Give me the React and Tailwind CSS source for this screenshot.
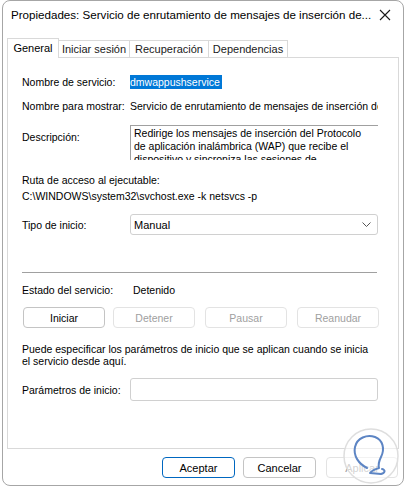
import { useState } from 'react'

const tabs = [
  { label: 'General', w: 'w-[52px]' },
  { label: 'Iniciar sesión', w: 'w-[71px]' },
  { label: 'Recuperación', w: 'w-[79px]' },
  { label: 'Dependencias', w: 'w-[79px]' },
]

function Row({ label, children, className = '' }) {
  return (
    <div className={`flex items-center ${className}`}>
      <span className="w-[108px] shrink-0 whitespace-nowrap">{label}</span>
      {children}
    </div>
  )
}

export default function App() {
  const [tab] = useState(0)

  return (
    <div className="w-[406px] h-[488px] bg-white font-['Liberation_Sans',Arial,sans-serif] text-[10.5px] leading-[14px] text-black overflow-hidden">
      <div className="relative ml-[2px] w-[402px] h-[486px] border border-[#a6a6a6] rounded-[8px] bg-white flex flex-col">

        {/* ── barra de título ── */}
        <div className="h-[37px] flex items-start pt-[7px] pl-[8px] pr-[12px]">
          <span className="flex-1 text-[11.6px] leading-[14px] whitespace-nowrap overflow-hidden">
            Propiedades: Servicio de enrutamiento de mensajes de inserción de...
          </span>
          <svg width="12" height="12" viewBox="0 0 12 12" className="mt-[1px]">
            <path d="M1 1 L11 11 M11 1 L1 11" stroke="#1a1a1a" strokeWidth="1.1" />
          </svg>
        </div>

        {/* ── pestañas ── */}
        <div className="flex items-end pl-[4px] h-[19px] relative z-10">
          {tabs.map((t, i) => (
            <div
              key={t.label}
              className={
                i === tab
                  ? `${t.w} h-[20px] pt-[2px] border border-b-0 border-[#d9d9d9] bg-white text-[11px] leading-[14px] text-center -mb-px`
                  : `${t.w} h-[17px] border border-l-0 border-b-0 border-[#d9d9d9] bg-white text-[11px] leading-[16px] text-center text-[#1a1a1a]`
              }
            >
              {t.label}
            </div>
          ))}
        </div>

        {/* ── panel General ── */}
        <div className="mx-[4px] h-[392px] border border-[#d9d9d9] px-[14px] pt-[17px]">
          <Row label="Nombre de servicio:">
            <span className="bg-[#0078d7] text-white pr-[2px]">dmwappushservice</span>
          </Row>
          <Row label="Nombre para mostrar:" className="mt-[10px]">
            <span className="w-[248px] whitespace-nowrap overflow-hidden">
              Servicio de enrutamiento de mensajes de inserción de WAP de administración de dispositivos
            </span>
          </Row>
          <div className="flex mt-[12px]">
            <span className="w-[108px] shrink-0 pt-[5px]">Descripción:</span>
            <div className="w-[248px] h-[35px] overflow-hidden border-t border-l border-[#a0a0a0] pl-[3px] pt-[1px] leading-[13px]">
              Redirige los mensajes de inserción del Protocolo<br />
              de aplicación inalámbrica (WAP) que recibe el<br />
              dispositivo y sincroniza las sesiones de
            </div>
          </div>
          <div className="mt-[12px] leading-[16px]">
            <div>Ruta de acceso al ejecutable:</div>
            <div>C:\WINDOWS\system32\svchost.exe -k netsvcs -p</div>
          </div>
          <Row label="Tipo de inicio:" className="mt-[10px]">
            <div className="w-[248px] h-[21px] border border-[#d0d0d0] rounded-[3px] flex items-center pl-[3px] pr-[6px]">
              <span className="flex-1 text-[11px]">Manual</span>
              <svg width="9" height="6" viewBox="0 0 9 6">
                <path d="M0.5 0.5 L4.5 4.5 L8.5 0.5" fill="none" stroke="#555" strokeWidth="1" />
              </svg>
            </div>
          </Row>
          <div className="mt-[37px] mr-[7px] border-t border-[#a0a0a0]" />
          <div className="flex mt-[10px]">
            <span className="w-[111px] shrink-0">Estado del servicio:</span>
            <span>Detenido</span>
          </div>
          <div className="flex gap-[8px] mt-[10px] pl-[1px]">
            <button className="w-[82px] h-[21px] border border-[#c4c4c4] rounded-[4px] bg-white text-[10.5px]">Iniciar</button>
            <button className="w-[82px] h-[21px] border border-[#e3e3e3] rounded-[4px] bg-white text-[10.5px] text-[#a0a0a0]">Detener</button>
            <button className="w-[82px] h-[21px] border border-[#e3e3e3] rounded-[4px] bg-white text-[10.5px] text-[#a0a0a0] ml-[2px]">Pausar</button>
            <button className="w-[82px] h-[21px] border border-[#e3e3e3] rounded-[4px] bg-white text-[10.5px] text-[#a0a0a0] ml-[2px]">Reanudar</button>
          </div>
          <p className="mt-[15px] leading-[12px] pr-[8px]">
            Puede especificar los parámetros de inicio que se aplican cuando se inicia el servicio desde aquí.
          </p>
          <Row label="Parámetros de inicio:" className="mt-[11px]">
            <div className="w-[248px] h-[23px] border border-[#d0d0d0] rounded-[3px]" />
          </Row>
        </div>

        {/* ── botones del diálogo ── */}
        <div className="flex justify-end gap-[8px] pr-[5px] mt-[8px]">
          <button className="w-[73px] h-[21px] border border-[#0067c0] rounded-[4px] bg-white text-[11px]">Aceptar</button>
          <button className="w-[73px] h-[21px] border border-[#c4c4c4] rounded-[4px] bg-white text-[11px]">Cancelar</button>
          <button className="w-[72px] h-[21px] border border-[#e3e3e3] rounded-[4px] bg-white text-[11px] text-[#a0a0a0] ml-[2px]">Aplicar</button>
        </div>

        {/* marca de agua */}
        <svg className="absolute left-[340px] top-[427px]" width="56" height="56" viewBox="0 0 56 56">
          <circle cx="28" cy="28" r="27" fill="rgba(255,255,255,0.55)" stroke="#dedede" strokeWidth="1.5" />
          <path
            d="M24 40 C16 36 10 28 12 19 C14 10 24 6 32 9 C40 12 42 21 38 29 C36 33 35 36 36 40 C33 41 29 42 27 45 L38 46 C42 45 43 42 39 41"
            fill="none"
            stroke="#5d85c4"
            strokeWidth="2"
            strokeLinecap="round"
            strokeLinejoin="round"
          />
        </svg>
      </div>
    </div>
  )
}
